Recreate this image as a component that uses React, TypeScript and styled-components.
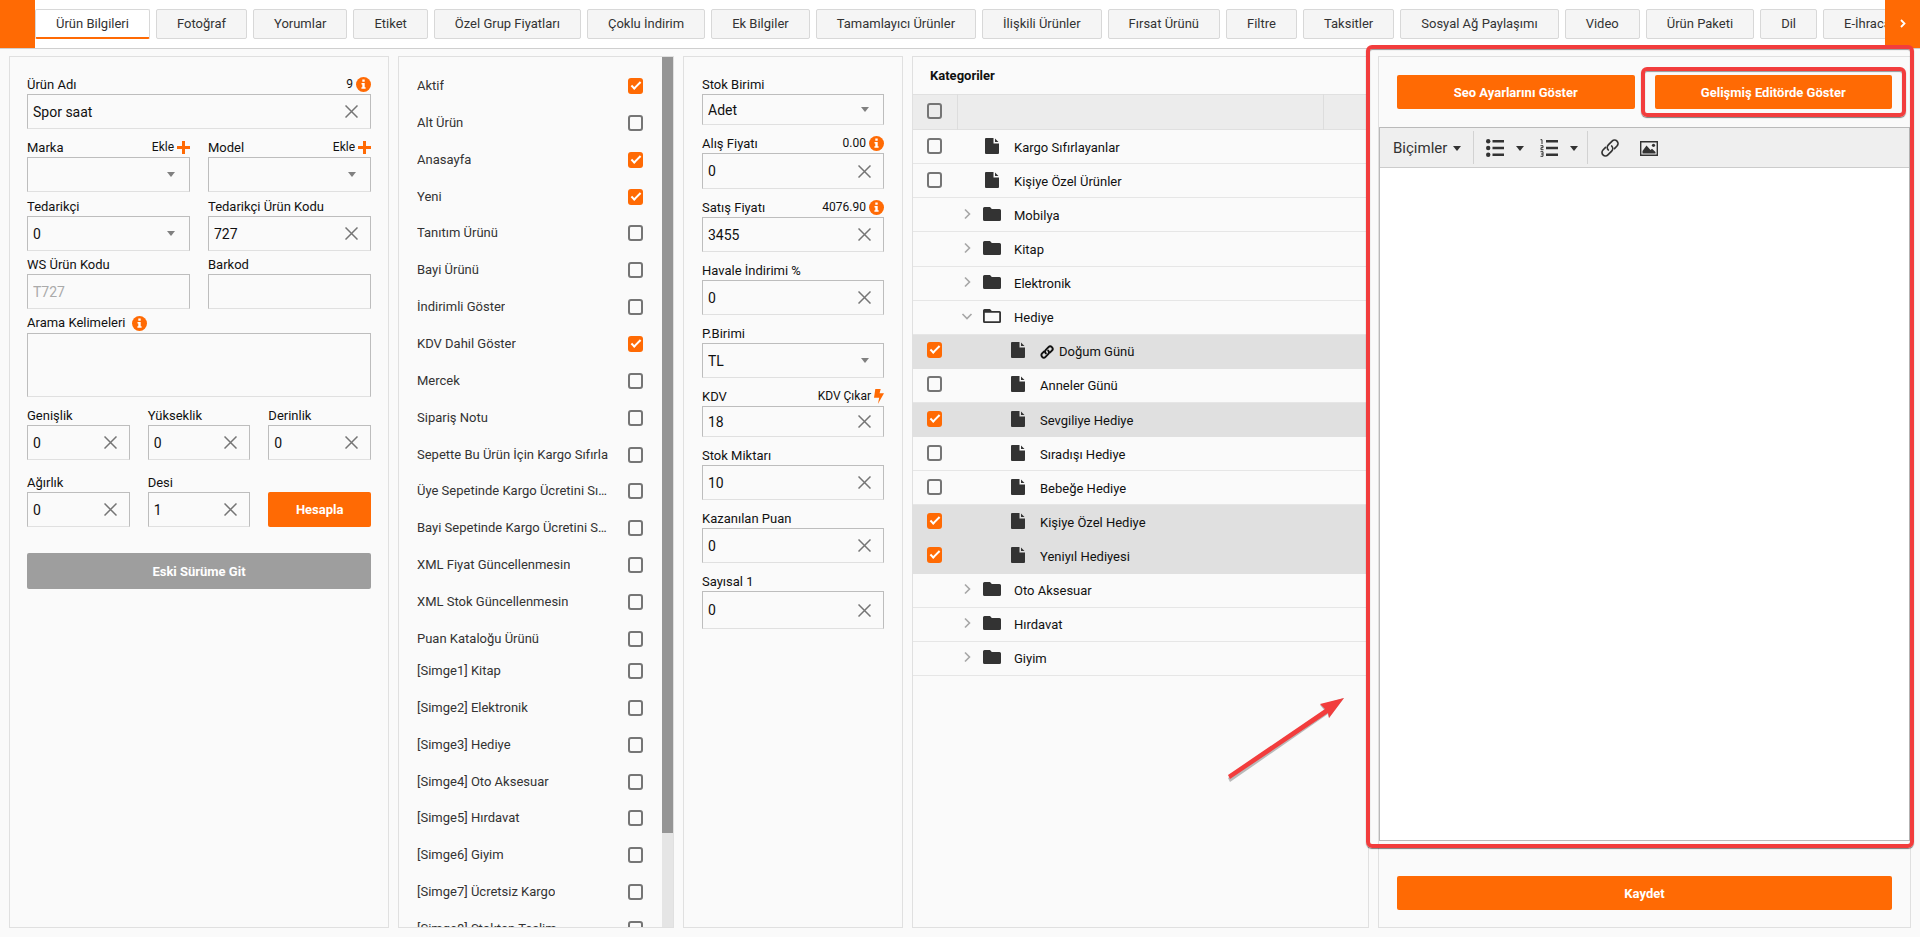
import React, { useState } from "react";
import styled, { createGlobalStyle } from "styled-components";

const orange = "#ff6a04";
const line = "#e0e0e0";

const GlobalStyle = createGlobalStyle`
  *, *::before, *::after { box-sizing: border-box; }
  body {
    margin: 0;
    background: #fafafa;
    color: #111;
    font-family: Roboto, "Liberation Sans", sans-serif;
    font-size: 13px;
    line-height: 20px;
  }
  button, input, select, textarea { font: inherit; color: inherit; }
`;

const Page = styled.div`
  display: flex;
  flex-direction: column;
  height: 100vh;
  min-height: 720px;
  overflow: hidden;
`;

/* ---------- tab bar ---------- */

const TabBar = styled.nav`
  display: flex;
  flex: none;
  height: 49px;
  background: #fff;
  border-bottom: 1px solid #cfcfcf;
`;

const TabArrow = styled.button`
  flex: none;
  display: grid;
  place-items: center;
  width: 35px;
  height: 48px;
  padding: 0 0 2px;
  border: 0;
  background: ${orange};
  color: #fff;
`;

const TabStrip = styled.div`
  flex: 1;
  min-width: 0;
  display: flex;
  gap: 6px;
  padding-top: 9px;
  overflow: hidden;
`;

const Tab = styled.button<{ $active?: boolean }>`
  flex: none;
  height: 30px;
  padding: 0 20px;
  border: 1px solid #d8d8d8;
  border-radius: 2px;
  background: ${(p) => (p.$active ? "#fff" : "#f5f5f5")};
  color: #333;
  white-space: nowrap;
  ${(p) => p.$active && `border-bottom: 2px solid ${orange};`}
`;

/* ---------- panels ---------- */

const Panels = styled.main`
  flex: 1;
  min-height: 0;
  display: grid;
  grid-template-columns: 380fr 276fr 220fr 457fr 533fr;
  grid-template-rows: minmax(0, 1fr);
  gap: 9px;
  padding: 7px 9px 9px;
`;

const Panel = styled.section`
  position: relative;
  min-width: 0;
  border: 1px solid ${line};
`;

const FormPanel = styled(Panel)<{ $side: number }>`
  display: flex;
  flex-direction: column;
  padding: 17px ${(p) => p.$side}px;
`;

const Row = styled.div<{ $gap?: number }>`
  display: flex;
  align-items: flex-end;
  gap: 18px;
  margin-top: ${(p) => p.$gap ?? 0}px;
`;

const Field = styled.div`
  flex: 1 1 0;
  min-width: 0;
`;

const FieldHead = styled.div`
  display: flex;
  align-items: center;
  justify-content: space-between;
  height: 20px;
  label { padding-top: 1px; }
`;

const Hint = styled.span`
  display: flex;
  align-items: center;
  gap: 3px;
  font-size: 12px;
  svg { flex: none; display: block; }
`;

const HintButton = styled.button`
  display: flex;
  align-items: center;
  gap: 3px;
  padding: 0;
  border: 0;
  background: none;
  font-size: 12px;
  svg { flex: none; }
`;

const KeywordsLabel = styled.label`
  display: flex;
  align-items: center;
  gap: 6px;
  height: 20px;
`;

const Box = styled.div<{ $h?: number }>`
  display: flex;
  align-items: center;
  height: ${(p) => p.$h ?? 35}px;
  border: 1px solid #bdbdbd;
  border-bottom-color: ${line};
  position: relative;
  font-size: 14px;
`;

const TextInput = styled.input`
  flex: 1;
  min-width: 0;
  height: 100%;
  padding: 0 5px;
  border: 0;
  background: none;
  outline: 0;
  &::placeholder { color: #aaa; }
`;

const Select = styled.select`
  flex: 1;
  min-width: 0;
  height: 100%;
  padding: 0 5px;
  border: 0;
  background: none;
  outline: 0;
  appearance: none;
`;

const ClearButton = styled.button`
  flex: none;
  display: grid;
  place-items: center;
  width: 37px;
  height: 100%;
  padding: 0;
  border: 0;
  background: none;
  color: #757575;
`;

const SelectMark = styled.span`
  position: absolute;
  right: 14px;
  width: 0;
  height: 0;
  border: 4px solid transparent;
  border-top: 5px solid #808080;
  border-bottom: 0;
  pointer-events: none;
`;

const Keywords = styled.textarea`
  display: block;
  width: 100%;
  height: 64px;
  padding: 5px;
  border: 1px solid #bdbdbd;
  border-bottom-color: ${line};
  background: none;
  resize: none;
  outline: 0;
`;

const Button = styled.button<{ $muted?: boolean; $h?: number }>`
  flex: 1 1 0;
  min-width: 0;
  height: ${(p) => p.$h ?? 35}px;
  padding: 1px 0 0;
  border: 0;
  border-radius: 2px;
  background: ${(p) => (p.$muted ? "#9e9e9e" : orange)};
  color: #fff;
  font-weight: 700;
`;

/* ---------- check boxes ---------- */

const Check = styled.input.attrs({ type: "checkbox" })`
  appearance: none;
  flex: none;
  display: block;
  width: 15px;
  height: 16px;
  margin: 0;
  border: 2px solid #757575;
  border-radius: 3px;
  background: transparent;
  &:checked {
    border: 0;
    background: ${orange};
  }
  &:checked::after {
    content: "";
    display: block;
    width: 10px;
    height: 5px;
    margin: 4px 0 0 3px;
    border-left: 2px solid #fff;
    border-bottom: 2px solid #fff;
    transform: rotate(-45deg);
  }
`;

const OptionsPanel = styled(Panel)`
  display: flex;
  overflow: hidden;
`;

const Options = styled.div`
  flex: 1;
  min-width: 0;
  padding: 13px 19px 0 18px;
  overflow: hidden;
`;

const OptionGroup = styled.div<{ $h: number }>`
  display: flex;
  flex-direction: column;
  justify-content: space-between;
  height: ${(p) => p.$h}px;
`;

const Option = styled.label`
  display: flex;
  align-items: center;
  justify-content: space-between;
  gap: 19px;
  height: 32px;
  color: #333;
  span {
    overflow: hidden;
    text-overflow: ellipsis;
    white-space: nowrap;
  }
`;

const ScrollTrack = styled.div`
  flex: none;
  display: flex;
  flex-direction: column;
  width: 11px;
  background: #e5e5e5;
  &::after { content: ""; flex: 4; }
`;

const ScrollThumb = styled.div`
  flex: 33;
  background: #959595;
`;

/* ---------- category tree ---------- */

const TreeTitle = styled.h2`
  margin: 0;
  padding: 9px 17px 8px;
  font-size: 13px;
  font-weight: 700;
  line-height: 20px;
`;

const Tree = styled.table`
  width: 100%;
  height: 582px;
  border-collapse: collapse;
  table-layout: fixed;
  th, td { padding: 0; text-align: left; font-weight: 400; }
`;

const HeadRow = styled.tr`
  height: 35px;
  background: #ececec;
  border-top: 1px solid ${line};
  border-bottom: 1px solid ${line};
  th + th { border-left: 1px solid #ddd; }
`;

const TreeRow = styled.tr<{ $on?: boolean }>`
  height: 34px;
  border-bottom: 1px solid ${(p) => (p.$on ? "#e0e0e0" : "#e6e6e6")};
  background: ${(p) => (p.$on ? "#e0e0e0" : "none")};
`;

const CheckCell = styled.div`
  padding: 0 0 2px 14px;
`;

const Node = styled.div<{ $child?: boolean }>`
  display: flex;
  align-items: center;
  padding-left: ${(p) => (p.$child ? 30 : 4)}px;
`;

const Toggle = styled.button`
  flex: none;
  display: grid;
  place-items: center;
  width: 12px;
  height: 20px;
  margin-right: 9px;
  padding: 0 0 2px;
  border: 0;
  background: none;
  color: #a6a6a6;
`;

const NodeIcon = styled.span`
  flex: none;
  display: grid;
  place-items: center;
  width: 20px;
  margin-right: 12px;
  padding-bottom: 2px;
  color: #333;
`;

const NodeText = styled.span`
  display: flex;
  align-items: center;
  gap: 5px;
  padding-top: 2px;
`;

/* ---------- editor ---------- */

const EditorPanel = styled(Panel)`
  display: flex;
  flex-direction: column;
`;

const Actions = styled.div`
  display: flex;
  gap: 20px;
  padding: 18px;
`;

const Editor = styled.div`
  flex: 1;
  min-height: 0;
  display: flex;
  flex-direction: column;
  border: 1px solid #bababa;
  background: #fff;
`;

const Toolbar = styled.div`
  flex: none;
  display: flex;
  align-items: center;
  height: 40px;
  padding-left: 13px;
  border-bottom: 1px solid #ccc;
  background: #efefef;
  color: #333;
`;

const ToolGroup = styled.div<{ $gap: number }>`
  display: flex;
  align-items: center;
  gap: ${(p) => p.$gap}px;
`;

const Tool = styled.button<{ $w: number }>`
  flex: none;
  display: flex;
  align-items: center;
  justify-content: space-between;
  width: ${(p) => p.$w}px;
  height: 32px;
  padding: 1px 0 0;
  border: 0;
  background: none;
  font-size: 15px;
`;

const Caret = styled.span`
  width: 0;
  height: 0;
  border: 4px solid transparent;
  border-top: 5px solid #333;
  border-bottom: 0;
`;

const Divider = styled.span<{ $before: number }>`
  width: 1px;
  height: 33px;
  margin: 0 12px 0 ${(p) => p.$before}px;
  background: #d2d2d2;
`;

const Content = styled.textarea`
  flex: 1;
  display: block;
  width: 100%;
  padding: 10px;
  border: 0;
  background: #fff;
  resize: none;
  outline: 0;
`;

const SaveArea = styled.div`
  display: flex;
  padding: 35px 18px 17px;
`;

/* ---------- callouts drawn over the page ---------- */

const Callout = styled.div`
  position: absolute;
  border: 4px solid #f23d3d;
  border-radius: 6px;
  box-shadow: 0 1px 1px rgba(0, 0, 0, 0.5), inset 0 1px 1px rgba(0, 0, 0, 0.4);
  pointer-events: none;
  z-index: 2;
`;

const PanelCallout = styled(Callout)`
  inset: -12px -4px 79px -13px;
`;

const ButtonCallout = styled(Callout)`
  top: 10px;
  right: 4px;
  width: 50%;
  height: 50px;
`;

const ArrowMark = styled.svg`
  position: absolute;
  right: 21px;
  top: 641px;
  pointer-events: none;
`;

/* ---------- icons ---------- */

const InfoIcon = () => (
  <svg width="15" height="15" viewBox="0 0 15 15" aria-hidden="true">
    <circle cx="7.5" cy="7.5" r="7.5" fill={orange} />
    <path fill="#fff" d="M6.3 2.6h2.4v2.2H6.3zM5.5 5.9h3.2v4.4h.9v1.5H5.4v-1.5h.9V7.4h-.8z" />
  </svg>
);

const PlusIcon = () => (
  <svg width="13" height="13" viewBox="0 0 13 13" aria-hidden="true">
    <path fill={orange} d="M5 0h3v5h5v3H8v5H5V8H0V5h5z" />
  </svg>
);

const BoltIcon = () => (
  <svg width="10" height="15" viewBox="0 0 10 15" aria-hidden="true">
    <path fill={orange} d="M1.300 0h5.400L5.600 4.200H10L3.900 15l1.300-6.200H0z" />
  </svg>
);

const ClearIcon = () => (
  <svg width="13" height="13" viewBox="0 0 13 13" aria-hidden="true">
    <path d="M.5.5l12 12M12.500.5l-12 12" stroke="currentColor" strokeWidth="1.500" fill="none" />
  </svg>
);

const Chevron = ({ open }: { open?: boolean }) => (
  <svg width="12" height="12" viewBox="0 0 12 12" aria-hidden="true">
    <path d={open ? "M1.500 4l4.500 4.500L10.500 4" : "M4 1.500l4.500 4.500L4 10.500"} stroke="currentColor" strokeWidth="1.600" fill="none" />
  </svg>
);

const FileIcon = () => (
  <svg width="14" height="16" viewBox="0 0 14 16" aria-hidden="true">
    <path fill="currentColor" d="M1 0h7.500v5.500H14V15a1 1 0 0 1-1 1H1a1 1 0 0 1-1-1V1a1 1 0 0 1 1-1zM10 .5L13.500 4H10z" />
  </svg>
);

const FolderIcon = ({ open }: { open?: boolean }) => (
  <svg width="18" height="14" viewBox="0 0 18 14" aria-hidden="true">
    {open ? (
      <path fill="currentColor" fillRule="evenodd" d="M1.500 0H7l1.800 2h7.700A1.500 1.500 0 0 1 18 3.500v9a1.500 1.500 0 0 1-1.500 1.500h-15A1.500 1.500 0 0 1 0 12.500v-11A1.500 1.500 0 0 1 1.500 0zM1.800 3.800v8.500h14.400V3.800z" />
    ) : (
      <path fill="currentColor" d="M1.500 0H7l1.800 2h7.700A1.500 1.500 0 0 1 18 3.500v9a1.500 1.500 0 0 1-1.500 1.500h-15A1.500 1.500 0 0 1 0 12.500v-11A1.500 1.500 0 0 1 1.500 0z" />
    )}
  </svg>
);

const LinkIcon = ({ size, weight }: { size: number; weight: number }) => (
  <svg width={size} height={size} viewBox="0 0 18 18" fill="none" stroke="currentColor" strokeWidth={weight} strokeLinecap="round" aria-hidden="true">
    <path d="M7.500 10.800a3.300 3.300 0 0 1 0-4.600l3.400-3.400a3.100 3.100 0 0 1 4.400 4.400l-2.300 2.300" />
    <path d="M10.500 7.200a3.300 3.300 0 0 1 0 4.600l-3.400 3.400a3.100 3.100 0 0 1-4.400-4.400l2.300-2.300" />
  </svg>
);

const BulletIcon = () => (
  <svg width="18" height="18" viewBox="0 0 18 18" fill="currentColor" aria-hidden="true">
    <circle cx="2.200" cy="2.200" r="2.200" />
    <circle cx="2.200" cy="9" r="2.200" />
    <circle cx="2.200" cy="15.800" r="2.200" />
    <path d="M6.500 1h11.500v2.400H6.500zM6.500 7.800h11.500v2.400H6.500zM6.500 14.600h11.500v2.400H6.500z" />
  </svg>
);

const NumberIcon = () => (
  <svg width="18" height="18" viewBox="0 0 18 18" fill="currentColor" aria-hidden="true">
    <path d="M6 1h12v2.400H6zM6 7.800h12v2.400H6zM6 14.600h12v2.400H6z" />
    <path fill="none" stroke="currentColor" d="M.5.700H2v4.300M.5 6.700H3v2H1v2h2.500M.5 12.700H3v4.600H.5M1 15h2" />
  </svg>
);

const ImageIcon = () => (
  <svg width="18" height="15" viewBox="0 0 18 15" aria-hidden="true">
    <path fill="none" stroke="currentColor" strokeWidth="1.400" d="M.7.7h16.600v13.600H.7z" />
    <path fill="currentColor" d="M2.500 12.500V10L6.500 4.500l4 4.500 1.500-1.200 3.500 3.200v1.500z" />
    <circle cx="13.500" cy="4.300" r="1.600" fill="currentColor" />
  </svg>
);

/* ---------- parts ---------- */

type FieldProps = {
  id: string;
  label: string;
  value?: string;
  kind?: "clear" | "select" | "plain";
  placeholder?: string;
  hint?: React.ReactNode;
  h?: number;
};

const FormField = ({ id, label, value = "", kind = "clear", placeholder, hint, h }: FieldProps) => {
  const [text, setText] = useState(value);
  return (
    <Field>
      <FieldHead>
        <label htmlFor={id}>{label}</label>
        {hint}
      </FieldHead>
      <Box $h={h}>
        {kind === "select" ? (
          <>
            <Select id={id} defaultValue={value}>
              <option value={value}>{value}</option>
            </Select>
            <SelectMark />
          </>
        ) : (
          <TextInput id={id} value={text} placeholder={placeholder} onChange={(e) => setText(e.target.value)} />
        )}
        {kind === "clear" && (
          <ClearButton type="button" aria-label={`${label} temizle`} onClick={() => setText("")}>
            <ClearIcon />
          </ClearButton>
        )}
      </Box>
    </Field>
  );
};

const AddHint = () => (
  <HintButton type="button">
    Ekle
    <PlusIcon />
  </HintButton>
);

const tabs = [
  "Ürün Bilgileri", "Fotoğraf", "Yorumlar", "Etiket", "Özel Grup Fiyatları", "Çoklu İndirim",
  "Ek Bilgiler", "Tamamlayıcı Ürünler", "İlişkili Ürünler", "Fırsat Ürünü", "Filtre", "Taksitler",
  "Sosyal Ağ Paylaşımı", "Video", "Ürün Paketi", "Dil", "E-İhracat",
];

const options: [string, boolean?][] = [
  ["Aktif", true], ["Alt Ürün"], ["Anasayfa", true], ["Yeni", true], ["Tanıtım Ürünü"], ["Bayi Ürünü"],
  ["İndirimli Göster"], ["KDV Dahil Göster", true], ["Mercek"], ["Sipariş Notu"],
  ["Sepette Bu Ürün İçin Kargo Sıfırla"], ["Üye Sepetinde Kargo Ücretini Sıfırla"],
  ["Bayi Sepetinde Kargo Ücretini Sıfırla"], ["XML Fiyat Güncellenmesin"], ["XML Stok Güncellenmesin"],
  ["Puan Kataloğu Ürünü"],
];

const badges: [string, boolean?][] = [
  ["[Simge1] Kitap"], ["[Simge2] Elektronik"], ["[Simge3] Hediye"], ["[Simge4] Oto Aksesuar"],
  ["[Simge5] Hırdavat"], ["[Simge6] Giyim"], ["[Simge7] Ücretsiz Kargo"], ["[Simge8] Stoktan Teslim"],
];

type Category = { name: string; kind: "file" | "folder" | "open"; child?: boolean; on?: boolean; linked?: boolean };

const categories: Category[] = [
  { name: "Kargo Sıfırlayanlar", kind: "file" },
  { name: "Kişiye Özel Ürünler", kind: "file" },
  { name: "Mobilya", kind: "folder" },
  { name: "Kitap", kind: "folder" },
  { name: "Elektronik", kind: "folder" },
  { name: "Hediye", kind: "open" },
  { name: "Doğum Günü", kind: "file", child: true, on: true, linked: true },
  { name: "Anneler Günü", kind: "file", child: true },
  { name: "Sevgiliye Hediye", kind: "file", child: true, on: true },
  { name: "Sıradışı Hediye", kind: "file", child: true },
  { name: "Bebeğe Hediye", kind: "file", child: true },
  { name: "Kişiye Özel Hediye", kind: "file", child: true, on: true },
  { name: "Yeniyıl Hediyesi", kind: "file", child: true, on: true },
  { name: "Oto Aksesuar", kind: "folder" },
  { name: "Hırdavat", kind: "folder" },
  { name: "Giyim", kind: "folder" },
];

const OptionList = ({ items, h }: { items: [string, boolean?][]; h: number }) => (
  <OptionGroup $h={h}>
    {items.map(([name, on]) => (
      <Option key={name}>
        <span>{name}</span>
        <Check defaultChecked={on} />
      </Option>
    ))}
  </OptionGroup>
);

export default function App() {
  return (
    <Page>
      <GlobalStyle />
      <TabBar>
        <TabArrow type="button" aria-label="Geri" />
        <TabStrip>
          {tabs.map((name, i) => (
            <Tab key={name} type="button" $active={i === 0}>
              {name}
            </Tab>
          ))}
        </TabStrip>
        <TabArrow type="button" aria-label="İleri">
          <svg width="6" height="9" viewBox="0 0 6 9" aria-hidden="true">
            <path d="M1 1l3.500 3.500L1 8" stroke="currentColor" strokeWidth="1.800" fill="none" />
          </svg>
        </TabArrow>
      </TabBar>

      <Panels>
        <FormPanel $side={17}>
          <Row>
            <FormField id="name" label="Ürün Adı" value="Spor saat" hint={<Hint>9<InfoIcon /></Hint>} />
          </Row>
          <Row $gap={8}>
            <FormField id="brand" label="Marka" kind="select" hint={<AddHint />} />
            <FormField id="model" label="Model" kind="select" hint={<AddHint />} />
          </Row>
          <Row $gap={4}>
            <FormField id="supplier" label="Tedarikçi" kind="select" value="0" />
            <FormField id="supplier-code" label="Tedarikçi Ürün Kodu" value="727" />
          </Row>
          <Row $gap={3}>
            <FormField id="ws-code" label="WS Ürün Kodu" kind="plain" placeholder="T727" />
            <FormField id="barcode" label="Barkod" kind="plain" />
          </Row>
          <Row $gap={4}>
            <Field>
              <KeywordsLabel htmlFor="keywords">
                Arama Kelimeleri
                <InfoIcon />
              </KeywordsLabel>
              <Keywords id="keywords" />
            </Field>
          </Row>
          <Row $gap={8}>
            <FormField id="width" label="Genişlik" value="0" />
            <FormField id="height" label="Yükseklik" value="0" />
            <FormField id="depth" label="Derinlik" value="0" />
          </Row>
          <Row $gap={12}>
            <FormField id="weight" label="Ağırlık" value="0" />
            <FormField id="desi" label="Desi" value="1" />
            <Button type="button">Hesapla</Button>
          </Row>
          <Row $gap={26}>
            <Button type="button" $muted $h={36}>Eski Sürüme Git</Button>
          </Row>
        </FormPanel>

        <OptionsPanel>
          <Options>
            <OptionList items={options} h={585} />
            <OptionList items={badges} h={290} />
          </Options>
          <ScrollTrack>
            <ScrollThumb />
          </ScrollTrack>
        </OptionsPanel>

        <FormPanel $side={18}>
          <Row>
            <FormField id="unit" label="Stok Birimi" kind="select" value="Adet" h={31} />
          </Row>
          <Row $gap={8}>
            <FormField id="buy" label="Alış Fiyatı" value="0" h={36} hint={<Hint>0.00<InfoIcon /></Hint>} />
          </Row>
          <Row $gap={8}>
            <FormField id="sell" label="Satış Fiyatı" value="3455" hint={<Hint>4076.90<InfoIcon /></Hint>} />
          </Row>
          <Row $gap={8}>
            <FormField id="transfer" label="Havale İndirimi %" value="0" />
          </Row>
          <Row $gap={8}>
            <FormField id="currency" label="P.Birimi" kind="select" value="TL" />
          </Row>
          <Row $gap={8}>
            <FormField
              id="vat"
              label="KDV"
              value="18"
              h={31}
              hint={<HintButton type="button">KDV Çıkar<BoltIcon /></HintButton>}
            />
          </Row>
          <Row $gap={8}>
            <FormField id="stock" label="Stok Miktarı" value="10" />
          </Row>
          <Row $gap={8}>
            <FormField id="points" label="Kazanılan Puan" value="0" />
          </Row>
          <Row $gap={8}>
            <FormField id="number" label="Sayısal 1" value="0" h={38} />
          </Row>
        </FormPanel>

        <Panel>
          <TreeTitle>Kategoriler</TreeTitle>
          <Tree>
            <colgroup>
              <col style={{ width: 44 }} />
              <col />
              <col style={{ width: 45 }} />
            </colgroup>
            <thead>
              <HeadRow>
                <th><CheckCell><Check aria-label="Tümünü seç" /></CheckCell></th>
                <th />
                <th />
              </HeadRow>
            </thead>
            <tbody>
              {categories.map((c) => (
                <TreeRow key={c.name} $on={c.on}>
                  <td>
                    {c.kind === "file" && (
                      <CheckCell><Check aria-label={c.name} defaultChecked={c.on} /></CheckCell>
                    )}
                  </td>
                  <td colSpan={2}>
                    <Node $child={c.child}>
                      <Toggle as={c.kind === "file" ? "span" : "button"}>
                        {c.kind !== "file" && <Chevron open={c.kind === "open"} />}
                      </Toggle>
                      <NodeIcon>
                        {c.kind === "file" ? <FileIcon /> : <FolderIcon open={c.kind === "open"} />}
                      </NodeIcon>
                      <NodeText>
                        {c.linked && <LinkIcon size={14} weight={2.5} />}
                        {c.name}
                      </NodeText>
                    </Node>
                  </td>
                </TreeRow>
              ))}
            </tbody>
          </Tree>
          <ArrowMark width="120" height="84" viewBox="0 0 120 84" aria-hidden="true">
            <path fill="#777" opacity="0.5" d="M1 80L98 13l-5-6 24-7-15 20-1-4L3 84z" />
            <path fill="#f23d3d" d="M1 77L98 11l-5-5 24-6-15 20-1-5L3 81z" />
          </ArrowMark>
        </Panel>

        <EditorPanel>
          <Actions>
            <Button type="button" $h={34}>Seo Ayarlarını Göster</Button>
            <Button type="button" $h={34}>Gelişmiş Editörde Göster</Button>
          </Actions>
          <Editor>
            <Toolbar>
              <Tool type="button" $w={68}>Biçimler<Caret /></Tool>
              <Divider $before={12} />
              <ToolGroup $gap={16}>
                <Tool type="button" $w={38} aria-label="Madde listesi"><BulletIcon /><Caret /></Tool>
                <Tool type="button" $w={38} aria-label="Numaralı liste"><NumberIcon /><Caret /></Tool>
              </ToolGroup>
              <Divider $before={9} />
              <ToolGroup $gap={20}>
                <Tool type="button" $w={20} aria-label="Bağlantı"><LinkIcon size={20} weight={1.5} /></Tool>
                <Tool type="button" $w={18} aria-label="Resim"><ImageIcon /></Tool>
              </ToolGroup>
            </Toolbar>
            <Content aria-label="Ürün açıklaması" />
          </Editor>
          <SaveArea>
            <Button type="button" $h={34}>Kaydet</Button>
          </SaveArea>
          <PanelCallout />
          <ButtonCallout />
        </EditorPanel>
      </Panels>
    </Page>
  );
}
